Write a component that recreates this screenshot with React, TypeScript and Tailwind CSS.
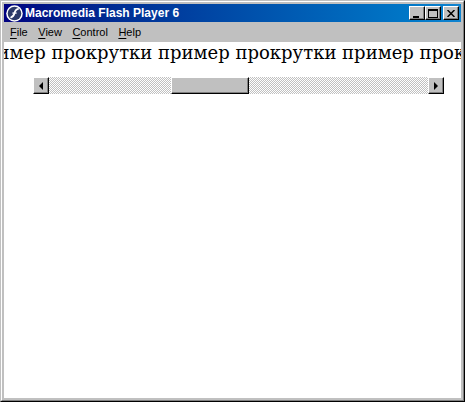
import { ReactNode } from 'react';

const raised =
  'border border-t-white border-l-white border-r-black border-b-black bg-[#c0c0c0] shadow-[inset_-1px_-1px_0_#808080]';

function CaptionButton({ children, className = '' }: { children: ReactNode; className?: string }) {
  return <div className={`${raised} w-4 h-3.5 flex items-center justify-center ${className}`}>{children}</div>;
}

function FlashIcon() {
  return (
    <svg width="17" height="17" viewBox="0 0 16 16" className="shrink-0">
      <circle cx="8" cy="8" r="7.8" fill="#fff" />
      <circle cx="8" cy="8" r="6.4" fill="#2c3a68" />
      <path d="M12 3.6c-2.6 0-3.4 1.6-4 4-.5 2.2-1.200 3.600-3.800 4.400" fill="none" stroke="#fff" strokeWidth="1.700" />
      <path d="M6 7.600h4" stroke="#fff" strokeWidth="1.200" />
    </svg>
  );
}

function MenuItem({ letter, rest }: { letter: string; rest: string }) {
  return (
    <span>
      <span className="underline underline-offset-2">{letter}</span>
      {rest}
    </span>
  );
}

export default function App() {
  return (
    <div className="w-[465px] h-[402px] bg-[#c0c0c0] border border-t-[#c0c0c0] border-l-[#c0c0c0] border-r-black border-b-black overflow-hidden">
      <div className="h-full border border-t-white border-l-white border-r-[#808080] border-b-[#808080] p-0.5 flex flex-col">
        <div className="h-[18px] shrink-0 bg-gradient-to-r from-[#000080] to-[#1084d0] flex items-center pl-0.5 pr-0.5">
          <FlashIcon />
          <span className="ml-[2px] text-white font-bold text-[12px] font-['Liberation_Sans',sans-serif]">
            Macromedia Flash Player 6
          </span>
          <div className="ml-auto flex">
            <CaptionButton>
              <div className="w-1.5 h-0.5 bg-black mt-[7px] mr-[2px]" />
            </CaptionButton>
            <CaptionButton>
              <div className="w-[10px] h-[9px] border border-t-2 border-black" />
            </CaptionButton>
            <CaptionButton className="ml-0.5">
              <svg width="8" height="7" viewBox="0 0 8 7">
                <path d="M0.500 0 L7.500 7 M7.500 0 L0.500 7" stroke="#000" strokeWidth="1.500" />
              </svg>
            </CaptionButton>
          </div>
        </div>

        <div className="h-5 shrink-0 flex items-center gap-[10.5px] pl-1.5 text-[11px] text-black font-['Liberation_Sans',sans-serif]">
          <MenuItem letter="F" rest="ile" />
          <MenuItem letter="V" rest="iew" />
          <MenuItem letter="C" rest="ontrol" />
          <MenuItem letter="H" rest="elp" />
        </div>

        <div className="flex-1 bg-white overflow-hidden">
          <div className="whitespace-nowrap ml-[-30px] text-[18px] leading-6 text-black font-['DejaVu_Serif',serif] -mt-[1px]">
            пример прокрутки пример прокрутки пример прокрутки
          </div>
          <div className="mt-[12px] ml-[29px] w-[411px] h-[17px] flex bg-[repeating-conic-gradient(#c0c0c0_0_25%,#fff_0_50%)] bg-[length:2px_2px]">
            <div className={`${raised} w-4 h-full flex items-center justify-center`}>
              <div className="border-y-[4px] border-y-transparent border-r-[4px] border-r-black" />
            </div>
            <div className={`${raised} ml-[122px] w-[78px] h-full`} />
            <div className={`${raised} ml-auto w-4 h-full flex items-center justify-center`}>
              <div className="border-y-[4px] border-y-transparent border-l-[4px] border-l-black" />
            </div>
          </div>
        </div>
      </div>
    </div>
  );
}
